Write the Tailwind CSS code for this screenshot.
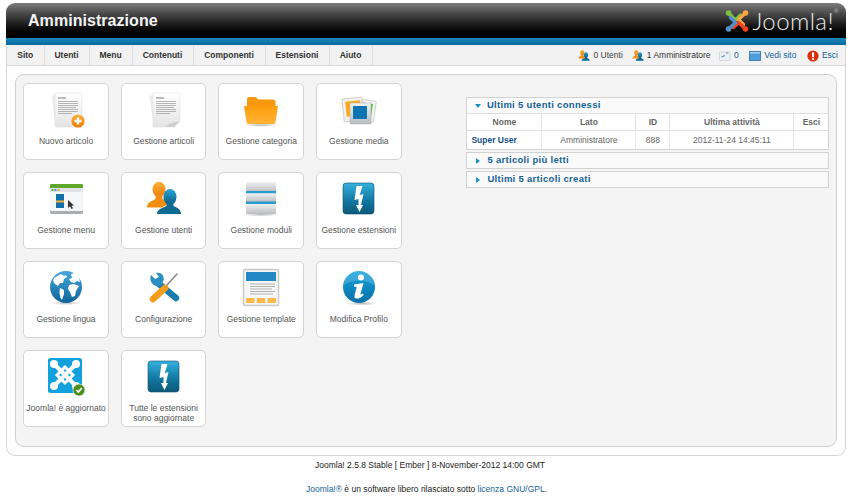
<!DOCTYPE html>
<html lang="it">
<head>
    <meta charset="UTF-8">
    <title>Amministrazione</title>
    <script src="https://cdn.jsdelivr.net/npm/@tailwindcss/browser@4"></script>
</head>
<body class="bg-white font-['Liberation_Sans',Arial,sans-serif] text-[8.500px] text-[#555]">
    <!-- shared gradients and icons -->
    <svg class="absolute w-0 h-0" aria-hidden="true">
        <defs>
            <linearGradient id="gPage" x1="0" y1="0" x2="0" y2="1"><stop offset="0" stop-color="#ffffff"/><stop offset="1" stop-color="#e4e4e4"/></linearGradient>
            <linearGradient id="gOrange" x1="0" y1="0" x2="0" y2="1"><stop offset="0" stop-color="#ff9d0d"/><stop offset="1" stop-color="#ffb437"/></linearGradient>
            <linearGradient id="gOrange2" x1="0" y1="0" x2="0" y2="1"><stop offset="0" stop-color="#fbb03b"/><stop offset="1" stop-color="#ee7d05"/></linearGradient>
            <linearGradient id="gTeal" x1="0" y1="0" x2="0" y2="1"><stop offset="0" stop-color="#2aa6d8"/><stop offset="1" stop-color="#0a5a7e"/></linearGradient>
            <linearGradient id="gFlash" x1="0" y1="0" x2="0" y2="1"><stop offset="0" stop-color="#36b0de"/><stop offset="0.55" stop-color="#137aa3"/><stop offset="1" stop-color="#0b5877"/></linearGradient>
            <linearGradient id="gGlobe" x1="0" y1="0" x2="0" y2="1"><stop offset="0" stop-color="#47a7de"/><stop offset="1" stop-color="#0e6498"/></linearGradient>
            <linearGradient id="gInfo" x1="0" y1="0" x2="0" y2="1"><stop offset="0" stop-color="#14a3dc"/><stop offset="1" stop-color="#0a6fa8"/></linearGradient>
            <linearGradient id="gSlab" x1="0" y1="0" x2="0" y2="1"><stop offset="0" stop-color="#f1f1f1"/><stop offset="1" stop-color="#b9bcbf"/></linearGradient>
            <radialGradient id="gShadow"><stop offset="0" stop-color="#000" stop-opacity=".28"/><stop offset="1" stop-color="#000" stop-opacity="0"/></radialGradient>
            <symbol id="flash" viewBox="0 0 48 48">
                <rect x="8" y="7" width="31" height="31" rx="3" fill="url(#gFlash)" stroke="#0b4f6c" stroke-width=".6"/>
                <path d="M21.500 10 L19.500 24 L23.500 23 L23.500 29 L21 29 L24.500 36 L28 29 L26 29 L28.500 18 L24.700 19 L27.500 10 Z" fill="#fff"/>
            </symbol>
            <symbol id="users" viewBox="0 0 48 48">
                <ellipse cx="19" cy="13.500" rx="6.500" ry="7.800" fill="url(#gOrange2)"/>
                <path d="M7 31.500 C7 26.500 11 25.500 15.500 23 L16 18 H22 L22.500 23 C25 24 28 25 30 27 L22 31.500 Z" fill="#f28d12"/>
                <ellipse cx="30" cy="21" rx="6.500" ry="8" fill="url(#gTeal)"/>
                <path d="M17 38 C17 33.500 22 32 26.500 30 L27 26 H33 L33.500 30 C38 32 41 33.500 41 38 Z" fill="#0f6a92"/>
            </symbol>
        </defs>
    </svg>

    <div class="ml-[6px] mr-[4.500px] mt-[3px]">
        <!-- header -->
        <div class="h-[35px] rounded-t-[9px] bg-gradient-to-b from-[#7c7c7c] to-[#000] flex items-center justify-between pl-[22px] pr-[7px]">
            <h1 class="text-[16px] font-bold tracking-[0.05px] text-[#f4f4f4]">Amministrazione</h1>
            <div class="flex items-center gap-[3px]">
                <svg class="w-[24px] h-[24px]" viewBox="0 0 24 24" fill="none" stroke-width="3.400" stroke-linecap="round" stroke-linejoin="round">
                    <path d="M4 4.500 L10.500 11 L15.500 6" stroke="#7ac143"/>
                    <path d="M20 4.500 L13.500 10.500 L18.500 15.500" stroke="#f9a541"/>
                    <path d="M20 19.500 L13.500 13.500 L8.500 18.500" stroke="#f44321"/>
                    <path d="M4 19.500 L10.500 13.500 L5.500 8.500" stroke="#5091cd"/>
                    <circle cx="3.500" cy="4" r="2.800" fill="#7ac143"/>
                    <circle cx="20.500" cy="4" r="2.800" fill="#f9a541"/>
                    <circle cx="20.500" cy="20" r="2.800" fill="#f44321"/>
                    <circle cx="3.500" cy="20" r="2.800" fill="#5091cd"/>
                </svg>
                <span class="font-['Lato',sans-serif] font-light text-[24px] leading-none tracking-[0.4px] text-[#e8e8e8]">Joomla!<sup class="text-[5px] align-top relative top-[2px]">®</sup></span>
            </div>
        </div>
        <div class="h-[7px] bg-gradient-to-b from-[#1a86bb] to-[#0b6a9e]"></div>

        <div class="border border-t-0 border-[#d4d4d4] rounded-b-[9px] h-[411px]">
            <!-- menu -->
            <div class="h-[21px] bg-[#f2f2f2] border-b border-[#d8d8d8] flex items-center justify-between">
                <ul class="flex h-full pt-[1px] font-bold text-[#333]">
                    <li class="flex items-center justify-center w-[37.500px] border-r border-[#dcdcdc]">Sito</li>
                    <li class="flex items-center justify-center w-[45px] border-r border-[#dcdcdc]">Utenti</li>
                    <li class="flex items-center justify-center w-[43px] border-r border-[#dcdcdc]">Menu</li>
                    <li class="flex items-center justify-center w-[61px] border-r border-[#dcdcdc]">Contenuti</li>
                    <li class="flex items-center justify-center w-[72px] border-r border-[#dcdcdc]">Componenti</li>
                    <li class="flex items-center justify-center w-[64px] border-r border-[#dcdcdc]">Estensioni</li>
                    <li class="flex items-center justify-center w-[43px] border-r border-[#dcdcdc]">Aiuto</li>
                </ul>
                <div class="flex items-center pt-[1px] pr-[6.500px] text-[#333]">
                    <svg class="w-[16px] h-[16px]"><use href="#users"/></svg>
                    <span class="ml-[1px] text-[#444]">0 Utenti</span>
                    <svg class="w-[16px] h-[16px] ml-[7px]"><use href="#users"/></svg>
                    <span class="ml-[1px]">1 Amministratore</span>
                    <svg class="w-[12px] h-[12px] ml-[8.500px]" viewBox="0 0 12 12"><rect x=".5" y="2" width="10.500" height="8.500" rx="1" fill="#eef1f3" stroke="#c5cbd0" stroke-width=".7"/><path d="M2.500 7 L6 5.500 M7 3 L9.500 3" stroke="#5b93b8" stroke-width="1.200"/></svg>
                    <span class="ml-[3px] text-[#146295]">0</span>
                    <svg class="w-[12px] h-[10px] ml-[10.500px]" viewBox="0 0 12 10"><rect x=".5" y=".5" width="11" height="9" fill="#4f9ddb" stroke="#2f6ea5" stroke-width=".8"/><rect x="1" y="1" width="10" height="1.500" fill="#a9d2f0"/></svg>
                    <a class="ml-[3px] text-[#146295]">Vedi sito</a>
                    <svg class="w-[12px] h-[12px] ml-[10.500px]" viewBox="0 0 12 12"><circle cx="6" cy="6" r="5.600" fill="#d9300f"/><rect x="5" y="2.200" width="2" height="5" rx=".8" fill="#fff"/><circle cx="6" cy="9" r="1.100" fill="#fff"/></svg>
                    <a class="ml-[3px] text-[#146295]">Esci</a>
                </div>
            </div>

            <!-- main panel -->
            <div class="mx-[8px] mt-[8px] h-[373px] rounded-[9px] border border-[#cfcfcf] bg-[#f4f4f4] flex">
                <div class="ml-[7.300px] mt-[8px] grid grid-cols-[repeat(4,85.500px)] auto-rows-[77px] gap-x-[12.100px] gap-y-[12px] text-center">

                    <a class="bg-white border border-[#d4d4d4] rounded-[5px] flex flex-col items-center pt-[3px]">
                        <svg class="w-12 h-12 shrink-0" viewBox="0 0 48 48">
                            <path d="M10 9 L34 6 L38 36 L14 39 Z" fill="#eeeeee" stroke="#ddd" stroke-width=".5"/>
                            <rect x="13" y="6" width="27" height="34" fill="url(#gPage)" stroke="#dcdcdc" stroke-width=".5"/>
                            <path d="M16 11 H24" stroke="#888" stroke-width="1.100"/>
                            <path d="M16 14.500 H36 M16 16.500 H36 M16 18.500 H36 M16 20.500 H34 M16 22.500 H36 M16 24.500 H36 M16 26.500 H30" stroke="#999" stroke-width=".7"/>
                            <circle cx="36" cy="34" r="6.600" fill="url(#gOrange2)"/>
                            <path d="M36 30.500 V37.500 M32.500 34 H39.500" stroke="#fff" stroke-width="2.400"/>
                        </svg>
                        <span class="block leading-[10.500px] mt-[0.500px]">Nuovo articolo</span>
                    </a>

                    <a class="bg-white border border-[#d4d4d4] rounded-[5px] flex flex-col items-center pt-[3px]">
                        <svg class="w-12 h-12 shrink-0" viewBox="0 0 48 48">
                            <path d="M10 9 L34 6 L38 36 L14 39 Z" fill="#eeeeee" stroke="#ddd" stroke-width=".5"/>
                            <path d="M13 6 H40 V34 L34 40 H13 Z" fill="url(#gPage)" stroke="#dcdcdc" stroke-width=".5"/>
                            <path d="M16 11 H24" stroke="#888" stroke-width="1.100"/>
                            <path d="M16 14.500 H36 M16 16.500 H36 M16 18.500 H36 M16 20.500 H34 M16 22.500 H36 M16 24.500 H36 M16 26.500 H30" stroke="#999" stroke-width=".7"/>
                            <path d="M40 34 L30 36.500 L25 40 H34 Z" fill="#cfcfcf"/>
                        </svg>
                        <span class="block leading-[10.500px] mt-[0.500px]">Gestione articoli</span>
                    </a>

                    <a class="bg-white border border-[#d4d4d4] rounded-[5px] flex flex-col items-center pt-[3px]">
                        <svg class="w-12 h-12 shrink-0" viewBox="0 0 48 48">
                            <ellipse cx="24" cy="38" rx="17" ry="2" fill="url(#gShadow)"/>
                            <path d="M10 14 C10 11 10.500 10 12 10 H18 C20 10 20 12.500 22 12.500 H36 C38 12.500 38.500 13.500 38.500 15 V20 H10 Z" fill="#f9980f"/>
                            <path d="M7 19 H41 L38.500 35 C38.300 36.500 37.500 37 36 37 H12 C10.500 37 9.700 36.500 9.500 35 Z" fill="url(#gOrange)"/>
                        </svg>
                        <span class="block leading-[10.500px] mt-[0.500px]">Gestione categoria</span>
                    </a>

                    <a class="bg-white border border-[#d4d4d4] rounded-[5px] flex flex-col items-center pt-[3px]">
                        <svg class="w-12 h-12 shrink-0" viewBox="0 0 48 48">
                            <rect x="23" y="13" width="17" height="21" fill="#f3f3f3" stroke="#bbb" stroke-width=".6" transform="rotate(8 31 23)"/>
                            <rect x="27" y="16" width="10" height="14" fill="#4fc22f" transform="rotate(8 31 23)"/>
                            <rect x="8" y="11" width="20" height="23" fill="#f0f0f0" stroke="#bbb" stroke-width=".6" transform="rotate(-6 18 22)"/>
                            <rect x="11" y="14" width="15" height="15" fill="#fba91c" transform="rotate(-6 18 22)"/>
                            <rect x="15" y="16" width="21" height="21" fill="url(#gSlab)" stroke="#aaa" stroke-width=".5"/>
                            <rect x="18" y="19" width="14" height="13" fill="#0e74b1"/>
                        </svg>
                        <span class="block leading-[10.500px] mt-[0.500px]">Gestione media</span>
                    </a>

                    <a class="bg-white border border-[#d4d4d4] rounded-[5px] flex flex-col items-center pt-[3px]">
                        <svg class="w-12 h-12 shrink-0" viewBox="0 0 48 48">
                            <path d="M8 34 H41 V36 C41 37.500 40 38 39 38 H10 C9 38 8 37.500 8 36 Z" fill="#a9adb0"/>
                            <rect x="8" y="8" width="33" height="27" rx="1.500" fill="#f4f6f7"/>
                            <path d="M8 12 V9.500 C8 8.500 8.500 8 9.500 8 H39.500 C40.500 8 41 8.500 41 9.500 V12 Z" fill="#5fa62c"/>
                            <rect x="8" y="12" width="33" height="4" fill="#dfe3e5"/>
                            <rect x="9.500" y="13" width="2" height="2" fill="#6bb54a"/><rect x="12.500" y="13" width="2" height="2" fill="#3aa0d0"/><rect x="15.500" y="13" width="2" height="2" fill="#f0a030"/>
                            <rect x="14" y="18" width="8" height="14" fill="#1071a8"/>
                            <rect x="14" y="24.500" width="8" height="2" fill="#f5b335"/>
                            <path d="M26 24 L26 32 L28 30.200 L29.500 33 L31 32.300 L29.600 29.700 L32 29.500 Z" fill="#333"/>
                        </svg>
                        <span class="block leading-[10.500px] mt-[0.500px]">Gestione menu</span>
                    </a>

                    <a class="bg-white border border-[#d4d4d4] rounded-[5px] flex flex-col items-center pt-[3px]">
                        <svg class="w-12 h-12 shrink-0"><use href="#users"/></svg>
                        <span class="block leading-[10.500px] mt-[0.500px]">Gestione utenti</span>
                    </a>

                    <a class="bg-white border border-[#d4d4d4] rounded-[5px] flex flex-col items-center pt-[3px]">
                        <svg class="w-12 h-12 shrink-0" viewBox="0 0 48 48">
                            <ellipse cx="24" cy="38.500" rx="18" ry="2" fill="url(#gShadow)"/>
                            <rect x="9" y="6" width="30" height="10" rx="1.500" fill="url(#gSlab)"/>
                            <rect x="9" y="15" width="30" height="2.500" fill="#2a9bd0"/>
                            <rect x="9" y="17.500" width="30" height="9" rx="1.500" fill="url(#gSlab)"/>
                            <rect x="9" y="25.500" width="30" height="2.500" fill="#2a9bd0"/>
                            <rect x="9" y="28" width="30" height="10" rx="1.500" fill="url(#gSlab)"/>
                        </svg>
                        <span class="block leading-[10.500px] mt-[0.500px]">Gestione moduli</span>
                    </a>

                    <a class="bg-white border border-[#d4d4d4] rounded-[5px] flex flex-col items-center pt-[3px]">
                        <svg class="w-12 h-12 shrink-0"><use href="#flash"/></svg>
                        <span class="block leading-[10.500px] mt-[0.500px] whitespace-nowrap">Gestione estensioni</span>
                    </a>

                    <a class="bg-white border border-[#d4d4d4] rounded-[5px] flex flex-col items-center pt-[3px]">
                        <svg class="w-12 h-12 shrink-0" viewBox="0 0 48 48">
                            <ellipse cx="24" cy="38" rx="15" ry="2" fill="url(#gShadow)"/>
                            <circle cx="24" cy="22" r="16" fill="url(#gGlobe)"/>
                            <path d="M12 13 L19 9 L22 11 L24 10 L25 12 L22 14 L21 18 L18 18 L16 21 L13 19 L11 16 Z" fill="#fff"/>
                            <path d="M18 23 L22 25 L22 29 L20 35 L18.500 33 L17.500 28 Z" fill="#fff"/>
                            <path d="M29 9 L33 8 L37 12 L38 17 L35 16 L32 18 L29 17 L27 14 L30 13 Z" fill="#fff"/>
                            <path d="M27 20 L32 19 L37 21 L34 26 L33 31 L30 32 L28 27 L26 24 Z" fill="#fff"/>
                        </svg>
                        <span class="block leading-[10.500px] mt-[0.500px]">Gestione lingua</span>
                    </a>

                    <a class="bg-white border border-[#d4d4d4] rounded-[5px] flex flex-col items-center pt-[3px]">
                        <svg class="w-12 h-12 shrink-0" viewBox="0 0 48 48">
                            <path d="M26 21 L37 9" stroke="#888" stroke-width="1.500" stroke-linecap="round"/>
                            <path d="M19 19 L36 33" stroke="#1a7fb0" stroke-width="6.500" stroke-linecap="round"/>
                            <path d="M13 34 L25 23" stroke="#f59c1a" stroke-width="6.500" stroke-linecap="round"/>
                            <path d="M11 10 L15 14 L19 12 L16 8 C20 6.500 25 10 23.500 15.500 L21 21 C15 23 8 17 11 10 Z" fill="#2a8fc0"/>
                        </svg>
                        <span class="block leading-[10.500px] mt-[0.500px]">Configurazione</span>
                    </a>

                    <a class="bg-white border border-[#d4d4d4] rounded-[5px] flex flex-col items-center pt-[3px]">
                        <svg class="w-12 h-12 shrink-0" viewBox="0 0 48 48">
                            <rect x="6.500" y="4.500" width="35" height="36" rx="1.500" fill="#f6f6f6" stroke="#c8c8c8" stroke-width="1.400"/>
                            <rect x="9" y="7" width="30" height="9" fill="#2488c4"/>
                            <path d="M13 19 H38 M13 21.500 H38 M13 24 H35 M13 26.500 H38 M13 29 H36" stroke="#aaa" stroke-width=".9"/>
                            <rect x="9" y="33" width="8.500" height="5" fill="#fdb84a"/><rect x="19.700" y="33" width="8.500" height="5" fill="#fdb84a"/><rect x="30.500" y="33" width="8.500" height="5" fill="#fdb84a"/>
                        </svg>
                        <span class="block leading-[10.500px] mt-[0.500px]">Gestione template</span>
                    </a>

                    <a class="bg-white border border-[#d4d4d4] rounded-[5px] flex flex-col items-center pt-[3px]">
                        <svg class="w-12 h-12 shrink-0" viewBox="0 0 48 48">
                            <ellipse cx="27" cy="38.500" rx="16" ry="2" fill="url(#gShadow)"/>
                            <circle cx="24" cy="22" r="16" fill="url(#gInfo)"/>
                            <path d="M9 20 A15 14 0 0 1 39 20 C30 14 18 14 9 20 Z" fill="#fff" opacity=".18"/>
                            <circle cx="26" cy="12.500" r="3" fill="#fff"/>
                            <path d="M19 19.500 L28.500 18 L25.500 29 C25.300 30 26 30 28 28.500 L28.500 30 C26 33 23 34 20.800 33.500 C19.300 33 19.200 31.800 19.600 30.300 L21.700 22 L19 21.500 Z" fill="#fff"/>
                        </svg>
                        <span class="block leading-[10.500px] mt-[0.500px]">Modifica Profilo</span>
                    </a>

                    <a class="bg-white border border-[#d4d4d4] rounded-[5px] flex flex-col items-center pt-[3px]">
                        <svg class="w-12 h-12 shrink-0" viewBox="0 0 48 48">
                            <rect x="6" y="4" width="34" height="35" rx="2.500" fill="#12a1dc"/>
                            <g stroke="#fff" stroke-width="4.200" fill="none" stroke-linecap="round">
                                <path d="M13 11 L33 31 M33 11 L13 31"/>
                                <path d="M23 13 L31 21 L23 29 L15 21 Z" stroke-width="3"/>
                            </g>
                            <g fill="#fff"><circle cx="12" cy="10" r="4"/><circle cx="34" cy="10" r="4"/><circle cx="12" cy="32" r="4"/><circle cx="34" cy="32" r="4"/></g>
                            <circle cx="37" cy="36" r="6" fill="#4a8f1c" stroke="#fff" stroke-width=".6"/>
                            <path d="M34.300 36 L36.300 38 L39.800 34.200" stroke="#fff" stroke-width="1.700" fill="none"/>
                        </svg>
                        <span class="block leading-[10.500px] mt-[0.500px] whitespace-nowrap">Joomla! è aggiornato</span>
                    </a>

                    <a class="bg-white border border-[#d4d4d4] rounded-[5px] flex flex-col items-center pt-[3px]">
                        <svg class="w-12 h-12 shrink-0"><use href="#flash"/></svg>
                        <span class="block leading-[10.500px] mt-[0.500px]">Tutte le estensioni<br>sono aggiornate</span>
                    </a>
                </div>

                <!-- right sliders -->
                <div class="ml-[64.800px] mt-[22px] w-[363px]">
                    <div class="border border-[#d2d2d2] bg-white">
                        <h3 class="h-[15px] flex items-center font-bold text-[9.500px] tracking-[0.3px] text-[#146295] bg-[#fafafa]">
                            <span class="ml-[8px] mr-[5.500px] w-0 h-0 border-x-[3.500px] border-x-transparent border-t-[4px] border-t-[#1d8fc4]"></span>Ultimi 5 utenti connessi
                        </h3>
                        <table class="w-full table-fixed border-separate border-spacing-0 text-center">
                            <thead class="font-bold text-[#666]">
                                <tr class="h-[18px]">
                                    <th class="w-[75px] border-y border-r border-[#e0e0e0]">Nome</th>
                                    <th class="w-[94px] border-y border-r border-[#e0e0e0]">Lato</th>
                                    <th class="w-[34px] border-y border-r border-[#e0e0e0]">ID</th>
                                    <th class="w-[124px] border-y border-r border-[#e0e0e0]">Ultima attività</th>
                                    <th class="border-y border-[#e0e0e0]">Esci</th>
                                </tr>
                            </thead>
                            <tbody>
                                <tr class="h-[18px] text-[#666]">
                                    <td class="border-r border-[#e8e8e8] text-left pl-[4px] font-bold text-[#14507f]">Super User</td>
                                    <td class="border-r border-[#e8e8e8]">Amministratore</td>
                                    <td class="border-r border-[#e8e8e8]">888</td>
                                    <td class="border-r border-[#e8e8e8]">2012-11-24 14:45:11</td>
                                    <td></td>
                                </tr>
                            </tbody>
                        </table>
                    </div>
                    <h3 class="mt-[2px] h-[17px] border border-[#d2d2d2] bg-[#fafafa] flex items-center font-bold text-[9.500px] tracking-[0.3px] text-[#146295]">
                        <span class="ml-[9px] mr-[7px] w-0 h-0 border-y-[3.500px] border-y-transparent border-l-[4px] border-l-[#1d8fc4]"></span>5 articoli più letti
                    </h3>
                    <h3 class="mt-[2px] h-[17px] border border-[#d2d2d2] bg-[#fafafa] flex items-center font-bold text-[9.500px] tracking-[0.3px] text-[#146295]">
                        <span class="ml-[9px] mr-[7px] w-0 h-0 border-y-[3.500px] border-y-transparent border-l-[4px] border-l-[#1d8fc4]"></span>Ultimi 5 articoli creati
                    </h3>
                </div>
            </div>
        </div>
    </div>

    <!-- footer -->
    <footer class="text-center text-[#222]">
        <p class="mt-[3px] pl-[10px] leading-[12px]">Joomla! 2.5.8 Stable [ Ember ] 8-November-2012 14:00 GMT</p>
        <p class="mt-[12px] pl-[3px] leading-[12px]"><a class="text-[#146295]">Joomla!®</a> è un software libero rilasciato sotto <a class="text-[#146295]">licenza GNU/GPL</a>.</p>
    </footer>
</body>
</html>
